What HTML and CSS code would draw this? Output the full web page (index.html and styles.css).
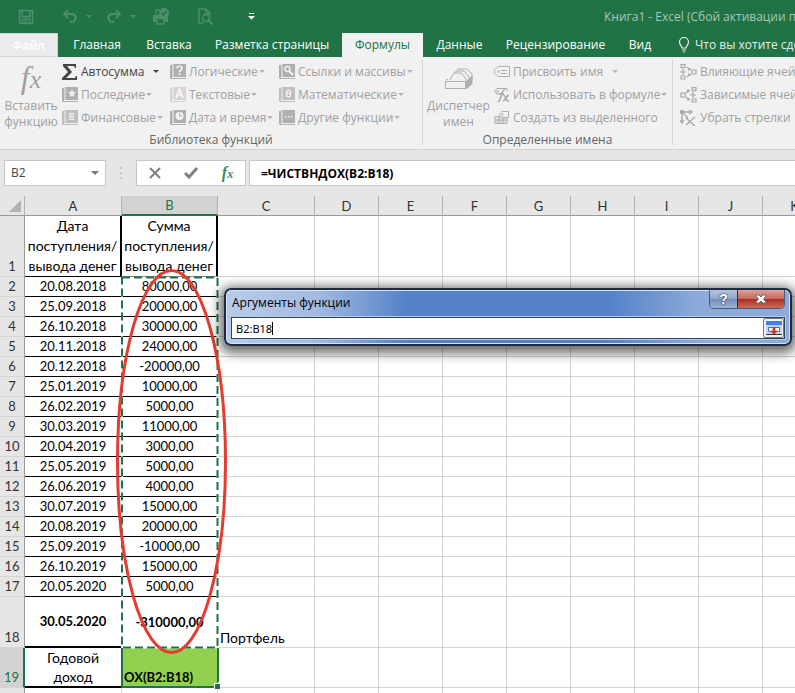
FILE: index.html
```html
<!DOCTYPE html>
<html lang="ru">
<head>
<meta charset="utf-8">
<title>Книга1 - Excel</title>
<link rel="stylesheet" href="styles.css">
</head>
<body>
<svg class="defs" width="0" height="0" aria-hidden="true"><symbol id="book" viewBox="0 0 16 16"><path d="M2 0h14v13H2zM0 1h2v13h14v1H1l-1-1z" fill="currentColor"/><path d="M3 0v13" stroke="#f1f1f1"/></symbol></svg>
<div class="app">
  <header class="titlebar">
    <div class="quick">
      <button class="qbtn save" aria-label="Сохранить"><svg width="16" height="16" viewBox="0 0 16 16" fill="none" stroke="currentColor" stroke-width="1.500"><path d="M1.500 1.500h13v13h-12l-1-1zM4 2v5.500h8V2M4.500 14v-4h7v4M7.500 11v3"/></svg></button>
      <button class="qbtn undo" aria-label="Отменить"><svg width="16" height="16" viewBox="0 0 16 16" fill="none" stroke="currentColor" stroke-width="2"><path d="M6 1L2 5l4 4M2 5h7c6 0 6 7 1 8H8"/></svg><i class="tri"></i></button>
      <button class="qbtn redo" aria-label="Повторить"><svg width="16" height="16" viewBox="0 0 16 16" fill="none" stroke="currentColor" stroke-width="2"><path d="M10 1l4 4-4 4M14 5H7C1 5 1 12 6 13h2"/></svg><i class="tri"></i></button>
      <button class="qbtn print" aria-label="Быстрая печать"><svg width="18" height="17" viewBox="0 0 18 17"><path d="M1 7h9l2 2h4v5h-3v-3H4v3H1z" fill="currentColor"/><path d="M4 6V2h4M5 11v5h7v-5" fill="none" stroke="currentColor" stroke-width="1.500"/><circle cx="12" cy="5" r="5" fill="currentColor"/><path d="M9.500 5l2 2 3-4" fill="none" stroke="#217346" stroke-width="1.500"/></svg></button>
      <button class="qbtn preview" aria-label="Просмотр"><svg width="16" height="17" viewBox="0 0 16 17" fill="none" stroke="currentColor" stroke-width="1.500"><path d="M5 15H1V1h7l4 4v2M8 1v4h4"/><circle cx="8" cy="10" r="3.500"/><path d="M10.500 12.500l4 4" stroke-width="2"/></svg></button>
      <button class="qbtn more" aria-label="Настройка панели"><svg width="7" height="7" viewBox="0 0 7 7" fill="currentColor"><path d="M1 0h5v1H1zM0 3h7L3.500 6.500z"/></svg></button>
    </div>
    <div class="caption">Книга1 - Excel (Сбой активации продукта)</div>
  </header>

  <nav class="tabs">
    <a class="tab file" href="#">Файл</a>
    <a class="tab home" href="#">Главная</a>
    <a class="tab insert" href="#">Вставка</a>
    <a class="tab layout" href="#">Разметка страницы</a>
    <a class="tab active" href="#">Формулы</a>
    <a class="tab data" href="#">Данные</a>
    <a class="tab review" href="#">Рецензирование</a>
    <a class="tab view" href="#">Вид</a>
    <a class="tab tell" href="#"><svg width="12" height="16" viewBox="0 0 12 16" fill="none" stroke="currentColor" stroke-width="1.200"><path d="M4 11C4 9 1.500 8 1.500 5a4.500 4.500 0 0 1 9 0C10.500 8 8 9 8 11zM4 13h4M5 15h2"/></svg>Что вы хотите сделать?</a>
  </nav>

  <section class="ribbon">
    <div class="group library">
      <div class="tools">
        <button class="big"><span class="bigfx"><i>f</i><i class="x">x</i></span><span>Вставить<br>функцию</span></button>
        <div class="stack s1">
          <button class="tool on"><svg width="16" height="16" viewBox="0 0 16 16"><path d="M1 0h13v4h-1l-1-2H5l5 6-6 6h9l1-2h1v4H0v-2l6-6-5-6z" fill="#444"/></svg><span>Автосумма</span><i class="tri wide"></i></button>
          <button class="tool"><svg class="bk" width="16" height="16" viewBox="0 0 16 16"><use href="#book"/><path d="M10 2l1.200 3H14l-2.200 2 .8 3L10 8.500 7.400 10l.8-3L6 5h2.800z" fill="#f1f1f1"/></svg><span>Последние</span><i class="tri"></i></button>
          <button class="tool"><svg class="bk mid" width="16" height="16" viewBox="0 0 16 16"><use href="#book"/><path d="M7.500 4h4M7.500 6.500h4M7.500 9h4" stroke="#f1f1f1" stroke-width="1.700" stroke-linecap="round"/></svg><span>Финансовые</span><i class="tri"></i></button>
        </div>
        <div class="stack s2">
          <button class="tool"><svg class="bk" width="16" height="16" viewBox="0 0 16 16"><use href="#book"/><path d="M7 4.500c0-3 5-3 5 0 0 1.500-2.500 1.500-2.500 3.500M9.500 9v2" fill="none" stroke="#f1f1f1" stroke-width="1.700"/></svg><span>Логические</span><i class="tri"></i></button>
          <button class="tool"><svg class="bk pale" width="16" height="16" viewBox="0 0 16 16"><use href="#book"/><path d="M6 11l3.500-9L13 11M7.500 8h4" fill="none" stroke="#f8f8f8" stroke-width="1.700"/></svg><span>Текстовые</span><i class="tri"></i></button>
          <button class="tool"><svg class="bk" width="16" height="16" viewBox="0 0 16 16"><use href="#book"/><circle cx="9.500" cy="6" r="4" fill="#f1f1f1"/><path d="M9.500 3v3H12" fill="none" stroke="#aaa"/></svg><span>Дата и время</span><i class="tri"></i></button>
        </div>
        <div class="stack s3">
          <button class="tool"><svg class="bk" width="16" height="16" viewBox="0 0 16 16"><use href="#book"/><circle cx="8.500" cy="5" r="2.500" fill="none" stroke="#f1f1f1" stroke-width="1.500"/><path d="M10 7l4 4" stroke="#f1f1f1" stroke-width="2"/></svg><span>Ссылки и массивы</span><i class="tri"></i></button>
          <button class="tool"><svg class="bk mid" width="16" height="16" viewBox="0 0 16 16"><use href="#book"/><ellipse cx="9.500" cy="6.500" rx="2" ry="3.500" fill="none" stroke="#f1f1f1" stroke-width="1.500"/><path d="M8 6.500h3" stroke="#f1f1f1"/></svg><span>Математические</span><i class="tri"></i></button>
          <button class="tool"><svg class="bk" width="16" height="16" viewBox="0 0 16 16"><use href="#book"/><path d="M6 6h1.500v1.500H6zM9 6h1.500v1.500H9zM12 6h1.500v1.500H12z" fill="#f1f1f1"/></svg><span>Другие функции</span><i class="tri"></i></button>
        </div>
      </div>
      <div class="gname">Библиотека функций</div>
    </div>
    <div class="group names">
      <div class="tools">
        <button class="big mgr"><svg width="28" height="22" viewBox="0 0 28 22" fill="#f1eff1" stroke="#b1aeb1"><path d="M10 8l3-7h9l5 5v6l-5 4"/><path d="M8 9l3-6h8l5 6v6"/><path d="M5 12l4-7h7l5 6v3"/><path d="M1 12l2-1M21 14l6-6v8l-6 5z" fill="#b1aeb1"/><path d="M.5 13.500h20v7H.5z"/></svg><span>Диспетчер<br>имен</span></button>
        <div class="stack">
          <button class="tool"><svg width="16" height="16" viewBox="0 0 16 16" fill="none" stroke="#b1aeb1"><path d="M4 2.500h11.500v10H4L.5 9V6z"/><circle cx="4.500" cy="7.500" r="1"/><path d="M7 6.500h6M7 9.500h6"/></svg><span>Присвоить имя</span><i class="tri wide"></i></button>
          <button class="tool"><svg width="16" height="16" viewBox="0 0 16 16" fill="none" stroke="#aaa7aa"><path d="M5 7L3 7 .5 4.500 3 1.500h10V4"/><circle cx="3.500" cy="4.500" r=".8"/><path d="M11 3C7 2 8 13 4 15M5 7h5M9 8c3-1 2 7 6 6M15 8c-2 0-4 6-6 6" stroke-width="1.500"/></svg><span>Использовать в формуле</span><i class="tri"></i></button>
          <button class="tool"><svg width="16" height="16" viewBox="0 0 16 16" fill="none" stroke="#b1aeb1"><path d="M1 6.500h12v7H1zM1 10h12M5 6v8M9 6v8" fill="#ddd"/><path d="M5.500 4l2.500-2.500h6.500v6H8L5.500 5.500z" fill="#f1f1f1"/><circle cx="8.500" cy="4.500" r=".8"/></svg><span>Создать из выделенного</span></button>
        </div>
      </div>
      <div class="gname">Определенные имена</div>
    </div>
    <div class="group audit">
      <div class="tools">
        <div class="stack">
          <button class="tool"><svg width="17" height="16" viewBox="0 0 17 16" fill="none" stroke="#aaa7aa" stroke-width="1.200"><path d="M1 .6h4v3H1zM1 12h4v3H1zM12 6h4v4h-4zM0 8h6M3 5v6M7 3l3 3M7 13l3-3M8 6h2V4M8 10h2v2"/></svg><span>Влияющие ячейки</span></button>
          <button class="tool"><svg width="17" height="16" viewBox="0 0 17 16" fill="none" stroke="#aaa7aa" stroke-width="1.200"><path d="M12 .6h4v3h-4zM12 12h4v3h-4zM1 6h4v4H1zM10 8h6M13 5v6M6 6l3-3M6 10l3 3M7 3h2v2M7 13h2v-2"/></svg><span>Зависимые ячейки</span></button>
          <button class="tool"><svg width="17" height="16" viewBox="0 0 17 16" fill="none" stroke="#aaa7aa" stroke-width="1.300"><path d="M2 2h9M9 0l3 2-3 2M2 2v11M0 10l2 3 2-3M2 2l6 6M6 8l9 8M15 7l-9 8"/><circle cx="2" cy="2" r="1.500" fill="#aaa7aa"/></svg><span>Убрать стрелки</span><i class="tri wide"></i></button>
        </div>
      </div>
    </div>
  </section>

  <section class="formulabar">
    <div class="namebox"><input class="name" value="B2" aria-label="Имя ячейки"><i class="tri"></i></div>
    <div class="grip"></div>
    <div class="fbtns">
      <button aria-label="Отмена"><svg width="12" height="12" viewBox="0 0 12 12" stroke="#808080" stroke-width="2"><path d="M1 1l10 10M11 1L1 11"/></svg></button>
      <button aria-label="Ввод"><svg width="14" height="12" viewBox="0 0 14 12" fill="none" stroke="#808080" stroke-width="3"><path d="M1 6l4 4 8-9"/></svg></button>
      <button class="fx" aria-label="Вставить функцию"><i>f</i><i class="x">x</i></button>
    </div>
    <input class="formula" value="=ЧИСТВНДОХ(B2:B18)" aria-label="Строка формул">
  </section>

  <main class="sheet">
    <table>
      <colgroup><col class="ch"><col class="ca"><col class="cb"><col class="ca"><col><col><col><col><col><col><col><col></colgroup>
      <thead><tr><th class="corner"><svg width="12" height="12" viewBox="0 0 12 12"><path d="M12 0v12H0z" fill="#b2b2b2"/></svg></th><th>A</th><th class="sel">B</th><th>C</th><th>D</th><th>E</th><th>F</th><th>G</th><th>H</th><th>I</th><th>J</th><th>K</th></tr></thead>
      <tbody id="rows"></tbody>
    </table>
    <svg class="overlay" width="240" height="500" viewBox="0 0 240 500" fill="none" aria-hidden="true">
      <path d="M122 81.500H217.500V451.500H122z" stroke="#fff" stroke-width="2"/>
      <path d="M122 81.500H217.500V451.500H122z" stroke="#217346" stroke-width="2" stroke-dasharray="8 4"/>
      <path d="M122 452v39h92M218 452v34" stroke="#217346" stroke-width="2"/>
      <path d="M214 487h6v6h-6z" fill="#fff"/><path d="M215 488h5v5h-5z" fill="#217346"/>
      <ellipse cx="171.500" cy="265.500" rx="54" ry="191" stroke="#e43c30" stroke-width="3"/>
    </svg>
    <div class="dialog" role="dialog" aria-labelledby="dt">
      <div class="dhead"><span id="dt">Аргументы функции</span>
        <div class="dbtns"><button class="help" aria-label="Справка">?</button><button class="close" aria-label="Закрыть"><svg width="12" height="10" viewBox="0 0 12 10"><path d="M1 1h3l2 2 2-2h3v1L8.500 5 11 8v1H8L6 7 4 9H1V8l2.500-3L1 2z" fill="#fff" stroke="#555b72" stroke-width=".8"/></svg></button></div>
      </div>
      <div class="dfield"><input value="B2:B18" aria-label="Диапазон"><i class="caret"></i><button class="pick" aria-label="Развернуть"><svg width="16" height="14" viewBox="0 0 16 14"><path d="M0 0h16v13H0z" fill="#c5d3e8"/><path d="M0 0h16v4H0z" fill="#3f7df0"/><path d="M2.500 6.500h11v4h-11z" fill="#fff" stroke="#5a6f96"/><path d="M7 7h2v3h2l-3 3.500L5 10h2z" fill="#d9381e" stroke="#b02a12" stroke-width=".6"/><path d="M0 13.500h16" stroke="#333"/></svg></button></div>
    </div>
  </main>
</div>
<script src="sheet.js"></script>
</body>
</html>
```
FILE: styles.css
```css
* { box-sizing: border-box; }
body { margin: 0; font: 12px/16px "Open Sans", "Noto Sans", sans-serif; color: #444; background: #fff; }
button { border: 0; padding: 0; background: none; font: inherit; color: inherit; }
input { border: 0; padding: 0; outline: 0; background: transparent; font: inherit; color: inherit; min-width: 0; }
a { color: inherit; text-decoration: none; }
svg { display: block; flex: none; }
.defs { position: absolute; }
.app { height: 100vh; overflow: hidden; display: flex; flex-direction: column; }
.tri { flex: none; border: 3px solid transparent; border-top-color: currentColor; border-bottom: 0; }

.titlebar { flex: none; height: 33px; background: #217346; color: #a6c7b5; display: flex; overflow: hidden; }
.quick { display: flex; flex: none; width: 604px; padding-left: 18px; color: #4d8f6b; align-items: center; }
.qbtn { display: flex; align-items: center; gap: 8px; flex: none; height: 30px; }
.save { width: 44px; }
.undo, .redo { width: 44px; }
.print { margin-left: 2px; width: 46px; }
.preview { width: 50px; }
.more { color: #fff; }
.caption { white-space: nowrap; line-height: 34px; }

.tabs { flex: none; height: 24px; background: #217346; color: #fff; display: flex; white-space: nowrap; overflow: hidden; line-height: 24px; }
.tab { flex: none; text-align: center; }
.file { width: 58px; background: #ebebeb; border: 1px solid #d4d4d4; border-left: 0; font-weight: 600; }
.home { width: 78px; }
.insert { width: 66px; }
.layout { width: 140px; }
.active { width: 81px; background: #f1f1f1; color: #217346; }
.data { width: 73px; }
.review { width: 119px; }
.view { width: 50px; }
.tell { display: flex; gap: 5px; align-items: center; margin-left: 13px; color: #e5efe9; }

.ribbon { flex: none; height: 93px; background: #f1f1f1; border-bottom: 1px solid #d2d2d2; display: flex; overflow: hidden; color: #a19fa1; }
.group { flex: none; display: flex; flex-direction: column; justify-content: space-between; margin: 3px 0 4px; border-right: 1px solid #d4d4d4; }
.library { width: 423px; }
.names { width: 250px; }
.audit { border: 0; padding-left: 7px; }
.tools { display: flex; white-space: nowrap; }
.big { width: 62px; display: flex; flex-direction: column; align-items: center; justify-content: space-between; height: 70px; }
.mgr { width: 71px; padding-top: 8px; }
.bigfx { font: 32px/34px "Liberation Serif", serif; }
.bigfx .x { font-size: 26px; }
.stack { display: flex; flex-direction: column; }
.s1 { width: 108px; }
.s2 { width: 109px; }
.tool { display: flex; align-items: center; height: 23px; }
.tool span { margin: 0 1px 0 3px; }
.tool .tri { color: #b5b3b5; }
.tool.on, .tool.on .tri { color: #444; }
.tool .wide { margin-left: 8px; }
.bk { color: #b1aeb1; }
.mid { color: #c0bdc0; }
.pale { color: #d8d2d8; }
.gname { text-align: center; color: #666; line-height: 10px; }

.formulabar { flex: none; background: #e6e6e6; padding: 10px 0 10px 4px; display: flex; height: 46px; }
.namebox, .fbtns, .formula { background: #fff; border: 1px solid #c6c6c6; }
.namebox { width: 102px; display: flex; align-items: center; padding: 0 6px; color: #777; }
.namebox .tri { border-width: 4px 4px 0; }
.name { flex: 1; color: #444; }
.grip { width: 30px; background: radial-gradient(circle, #aaa 1px, transparent 1px) center / 30px 5px; margin: 5px 0; }
.fbtns { width: 110px; display: flex; align-items: center; justify-content: space-around; }
.fx { color: #3f8a60; font: bold 16px/20px "Liberation Serif", serif; }
.fx .x { font-size: 12px; }
.formula { flex: 1; margin-left: 3px; padding-left: 11px; border-right: 0; font: bold 12px "Open Sans", sans-serif; color: #000; }

.sheet { flex: 1; position: relative; overflow: hidden; }
table { table-layout: fixed; border-collapse: separate; border-spacing: 0; width: 827px; font: 13px/19px Lato, sans-serif; color: #000; }
col { width: 64px; }
.ch { width: 25px; }
.ca { width: 97px; }
.cb { width: 96px; }
th, td { padding: 0; font-weight: 400; border-right: 1px solid #d4d4d4; border-bottom: 1px solid #d4d4d4; overflow: hidden; white-space: nowrap; text-align: center; }
thead th { height: 20px; line-height: 18px; background: #e6e6e6; border-right-color: #b1b1b1; border-bottom-color: #999; color: #333; }
thead .corner svg { margin-left: 9px; }
thead .sel { background: #d2d2d2; color: #217346; border-bottom: 2px solid #217346; }
tbody th { background: #e6e6e6; border-right-color: #999; vertical-align: bottom; color: #333; }
tbody td { height: 20px; }
tbody .a, tbody .b { border-bottom-color: #000; }
tbody .a { border-right-color: #000; }
.r1 td { height: 61px; line-height: 20px; font-size: 14px; vertical-align: bottom; }
.r1 .a, .r1 .b { border-right: 2px solid #000; }
.r18 td { height: 51px; }
.r18 .a, .r18 .b { font-weight: 700; }
.r18 .c { font-size: 14px; text-align: left; vertical-align: bottom; padding-left: 2px; }
.r19 td { height: 40px; font-size: 14px; }
.r18 .a, .r19 .a { border-bottom-width: 2px; }
.r19 th { background: #d2d2d2; color: #217346; border-right: 2px solid #217346; }
.r19 .b { background: #92d050; border-color: #217346; font-size: 13px; vertical-align: bottom; text-align: left; padding-left: 2px; font-weight: 700; }
.overlay { position: absolute; left: 0; top: 0; pointer-events: none; }

.dialog { position: absolute; left: 224px; right: 3px; top: 92px; border: 2px solid #1c2a42; border-radius: 7px; background: linear-gradient(90deg, #b9cbe9, #a3bbe2 16%, #5482c8 32%, #5482c8 68%, #8eaad9 84%, #8eaad9); box-shadow: inset 0 0 0 1px #d5e3f7, 0 3px 12px 4px rgba(0,0,0,.6); padding: 0 5px 5px; color: #000; }
.dhead { display: flex; justify-content: space-between; height: 27px; line-height: 26px; padding-left: 1px; }
.dbtns { display: flex; height: 19px; border: 1px solid #48597a; border-top: 0; border-radius: 0 0 5px 5px; overflow: hidden; }
.help { width: 27px; font: bold 14px/18px "Liberation Sans", sans-serif; color: #fff; text-shadow: 0 0 2px #333, 0 0 1px #333; background: linear-gradient(#b7c5dd, #91a6ca 50%, #728bb8 50%, #9db4d8); }
.close { width: 47px; display: grid; place-items: center; border-left: 1px solid #5b1a18; background: linear-gradient(#dca198, #c7665a 50%, #a92d22 50%, #cf6b56); }
.dfield { position: relative; height: 22px; display: flex; background: #fff; border: 1px solid #30425f; outline: 1px solid #b7cbea; font: 11px "Noto Sans", sans-serif; }
.dfield input { flex: 1; padding-left: 4px; }
.caret { position: absolute; left: 40px; top: 4px; width: 1px; height: 13px; background: #000; }
.pick { width: 21px; display: grid; place-items: center; border: 1px solid #777; border-radius: 2px; background: #f2f2f2; }
```
FILE: sheet.js
```js
const rows = [
  ["Дата<br>поступления/<br>вывода денег", "Сумма<br>поступления/<br>вывода денег"],
  ["20.08.2018", "80000,00"], ["25.09.2018", "20000,00"], ["26.10.2018", "30000,00"],
  ["20.11.2018", "24000,00"], ["20.12.2018", "-20000,00"], ["25.01.2019", "10000,00"],
  ["26.02.2019", "5000,00"], ["30.03.2019", "11000,00"], ["20.04.2019", "3000,00"],
  ["25.05.2019", "5000,00"], ["26.06.2019", "4000,00"], ["30.07.2019", "15000,00"],
  ["20.08.2019", "20000,00"], ["25.09.2019", "-10000,00"], ["26.10.2019", "15000,00"],
  ["20.05.2020", "5000,00"], ["30.05.2020", "-310000,00", "Портфель"],
  ["Годовой<br>доход", "ОХ(B2:B18)"]
];
document.getElementById("rows").innerHTML = rows.map((r, i) =>
  `<tr class="r${i + 1}"><th>${i + 1}</th><td class="a">${r[0]}</td><td class="b">${r[1]}</td><td class="c">${r[2] || ""}</td>${"<td></td>".repeat(8)}</tr>`
).join("") + `<tr><th></th>${"<td></td>".repeat(11)}</tr>`;
```
